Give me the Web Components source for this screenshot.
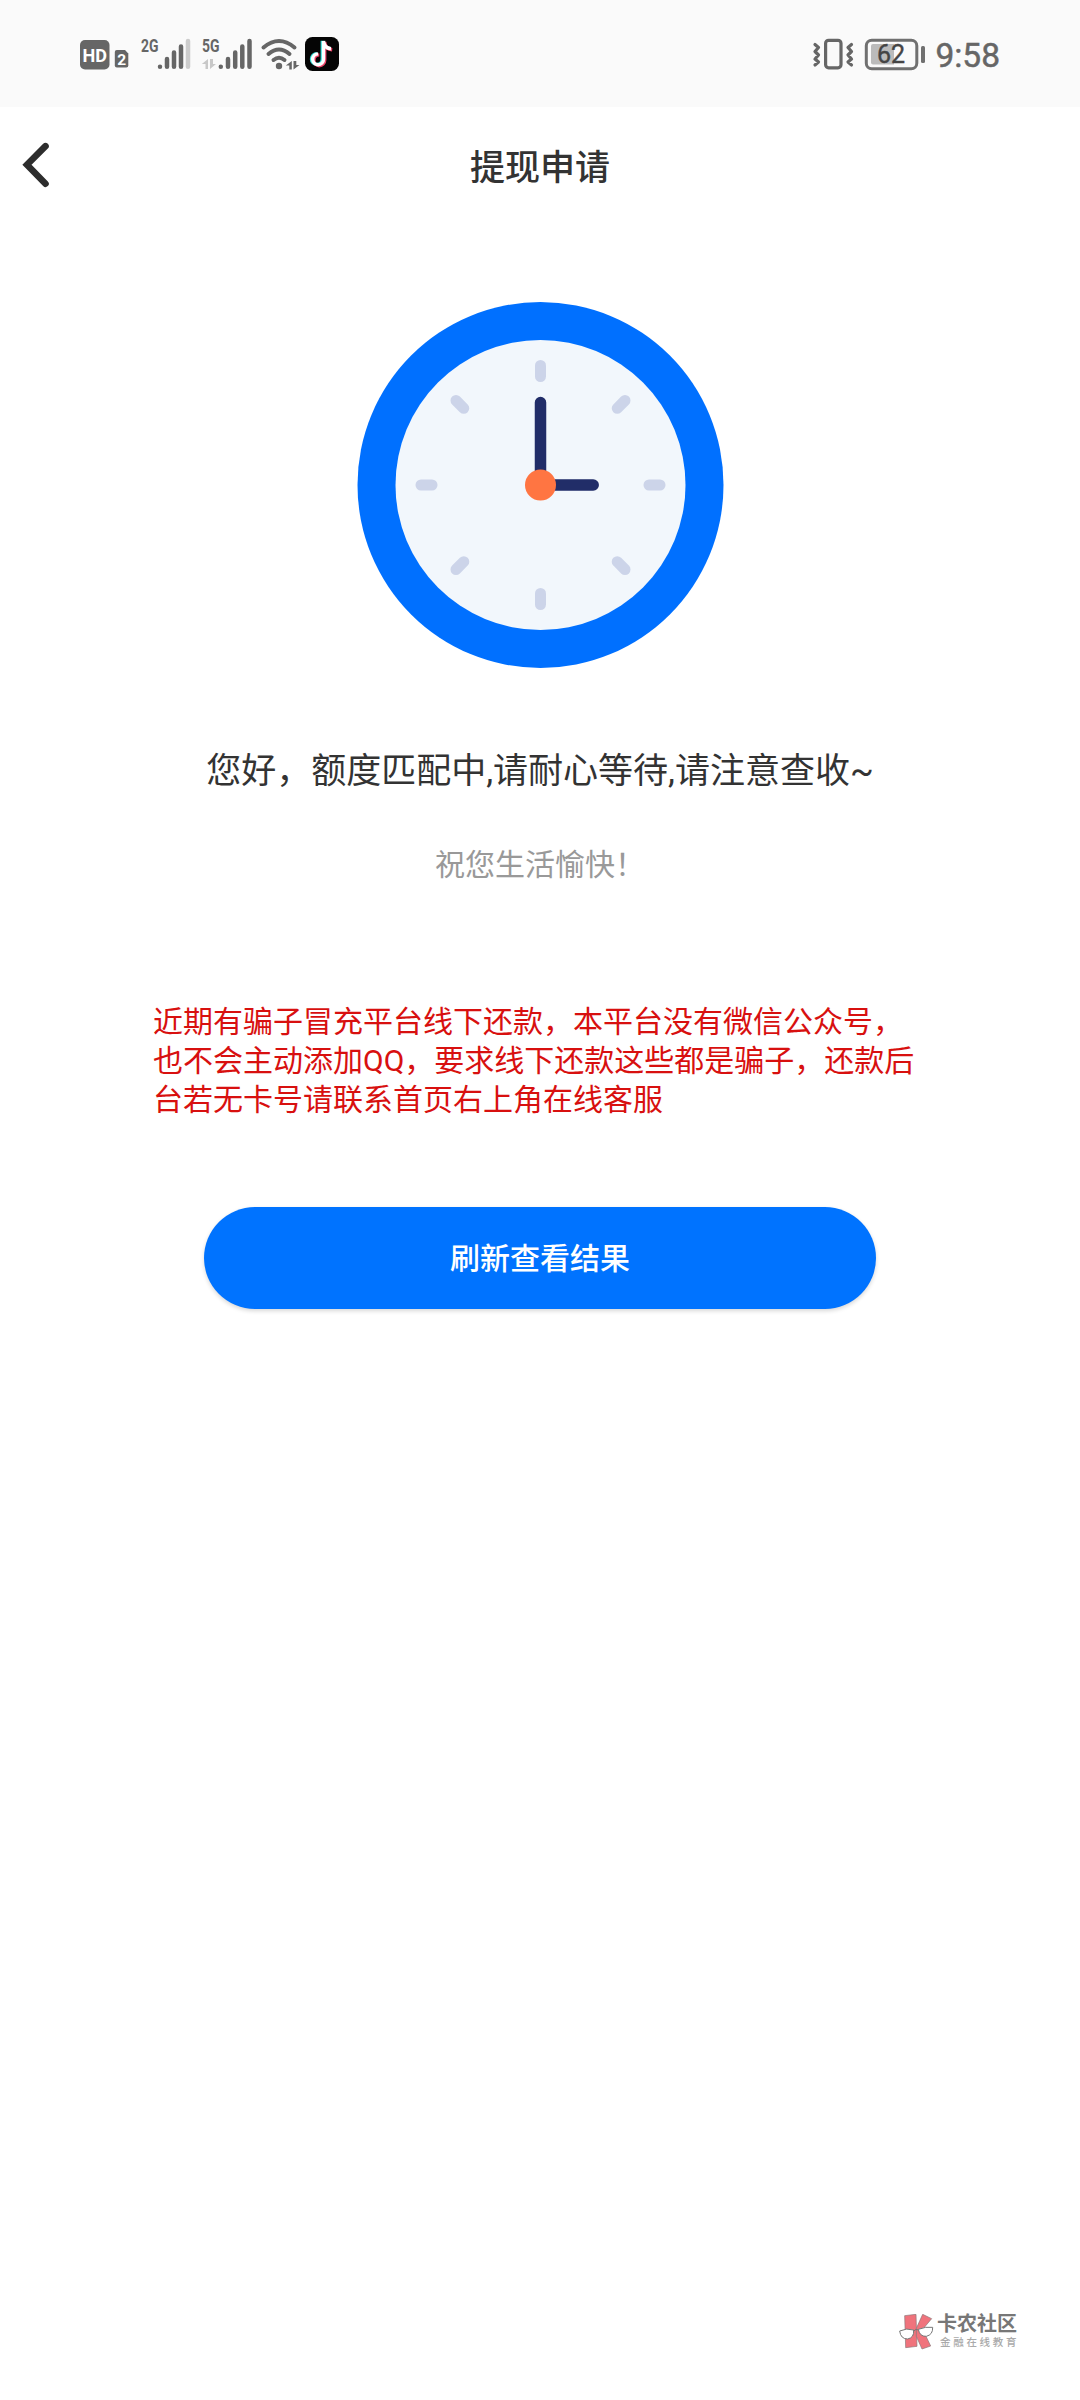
<!DOCTYPE html>
<html lang="zh-CN">
<head>
<meta charset="utf-8">
<title>提现申请</title>
<style>
html,body{margin:0;padding:0;background:#fff}
body{width:1080px;height:2400px;overflow:hidden;font-family:Roboto,"Noto Sans CJK SC",sans-serif;color:#333}
</style>
</head>
<body>
<withdraw-page></withdraw-page>
<script>
const define = (name, css, html) => customElements.define(name, class extends HTMLElement {
  constructor() {
    super();
    this.attachShadow({mode: 'open'}).innerHTML = `<style>${css}</style>${html}`;
  }
});

define('status-bar', `
:host{display:flex;justify-content:space-between;box-sizing:border-box;height:107px;padding:25px 80px 0 80px;background:#fafafa;flex:none}
div{display:flex}
svg{display:block;height:60px}
text{font-family:Roboto,sans-serif}
.time{font-size:33.500px;line-height:61px;color:#666;-webkit-text-stroke:.5px #666}
`, `
<div>
<svg width="52" viewBox="80 25 52 60"><rect x="80" y="40" width="29.5" height="29.5" rx="5" fill="#666"/><text x="94.8" y="61.5" font-size="18.5" font-weight="700" fill="#fff" text-anchor="middle" textLength="24.5" lengthAdjust="spacingAndGlyphs">HD</text>
<path d="M117 50h8l3.300 3.500v12a2 2 0 0 1-2 2h-9.500a2 2 0 0 1-2-2v-13.500a2 2 0 0 1 2-2z" fill="#666"/><text x="121.600" y="64.500" font-size="15.500" font-weight="700" fill="#fff" text-anchor="middle">2</text></svg>
<svg width="64" viewBox="132 25 64 60"><text x="141" y="52" font-size="18.500" font-weight="700" fill="#666" textLength="17.500" lengthAdjust="spacingAndGlyphs">2G</text>
<g stroke="#666" stroke-width="4.500" stroke-linecap="round"><path d="M160 66.700v.1M167 59v7.700M174 52.500v14.200M181 46.500v20.200"/><path d="M188 41v25.700" stroke="#ccc"/></g></svg>
<svg width="60" viewBox="196 25 60 60"><text x="202" y="52" font-size="18.500" font-weight="700" fill="#666" textLength="17.500" lengthAdjust="spacingAndGlyphs">5G</text>
<path d="M208 59v10h-2.500v-5h-3.700zM210 59v10l6-5h-3v-5z" fill="#c8c8c8"/>
<path d="M220.800 66.700v.1M228 59v7.700M235.200 52.500v14.200M242.300 46.500v20.200M249.500 41v25.700" stroke="#666" stroke-width="4.500" stroke-linecap="round"/></svg>
<svg width="48" viewBox="256 25 48 60"><g fill="none" stroke="#666" stroke-width="4" stroke-linecap="round"><path d="M263.500 47.500Q279 34.500 294.500 47.500M268.500 54Q279 45 289.500 54M273.500 60Q279 55.500 284.500 60"/></g><circle cx="279" cy="66" r="3.200" fill="#666"/><path d="M291.800 61v8.500h-2.500v-4h-3.500zM293.500 61v8.500l6-4.500h-3.200v-4z" fill="#666"/></svg>
<svg width="40" viewBox="304 25 40 60"><rect x="305" y="37" width="34" height="34" rx="7.500" fill="#050505"/><g fill="none" stroke-width="3.400"><path d="M323.500 41v18.300a5.400 5.400 0 1 1-5.400-5.400M323.500 41c.4 4.500 3 7.300 7.500 7.700" stroke="#35ddda" transform="translate(-1.200,-.2)"/><path d="M323.500 41v18.300a5.400 5.400 0 1 1-5.400-5.400M323.500 41c.4 4.500 3 7.300 7.500 7.700" stroke="#ed456a" transform="translate(1.200,1)"/><path d="M323.500 41v18.300a5.400 5.400 0 1 1-5.400-5.400M323.500 41c.4 4.500 3 7.300 7.500 7.700" stroke="#fff"/></g></svg>
</div>
<div>
<svg width="48" viewBox="811 25 48 60"><g fill="none" stroke="#666" stroke-width="3.200" stroke-linejoin="round" stroke-linecap="round"><rect x="825.600" y="40.300" width="15.400" height="27.500" rx="3"/><path d="M815 44.500l3.500 3-3.500 4 3.500 3.500-3.500 4 3.500 3-3.500 3M851.500 44.500l-3.500 3 3.500 4-3.500 3.500 3.500 4-3.500 3 3.500 3"/></g></svg>
<svg width="76" viewBox="859 25 76 60"><rect x="866.300" y="40.300" width="50.500" height="28.500" rx="5.500" fill="none" stroke="#707070" stroke-width="3"/><path d="M873 44h21v20.500h-21a2 2 0 0 1-2-2V46a2 2 0 0 1 2-2z" fill="#bbb"/><text x="891" y="62.500" font-size="25" fill="#444" stroke="#444" stroke-width=".4" text-anchor="middle">62</text><rect x="921" y="46" width="4" height="17" rx="1.500" fill="#707070"/></svg>
<span class="time">9:58</span>
</div>`);

define('nav-header', `
:host{display:grid;grid-template-columns:120px 1fr 120px;align-items:center;height:120px;flex:none}
svg{display:block}
h1{margin:0;padding-top:4px;text-align:center;font:500 35px/50px Roboto,"Noto Sans CJK SC",sans-serif;color:#333}
`, `<svg width="70" height="50" viewBox="0 140 70 50"><path d="M45.500 144.200L27 162.700L45.500 181.700" fill="none" stroke="#2d2d2d" stroke-width="6.600" stroke-linecap="round"/></svg><h1><slot></slot></h1>`);

define('waiting-clock', `:host{display:block;width:367px;height:366px}svg{display:block}`, `
<svg width="367" height="366" viewBox="-183.500 -183 367 366">
<circle r="183" fill="#0070ff"/><circle r="145" fill="#f2f7fc"/>
<g stroke="#ccd4e9" stroke-width="11" stroke-linecap="round">${[0,45,90,135,180,225,270,315].map(a => `<path d="M0-119.500V-108.500" transform="rotate(${a})"/>`).join('')}</g>
<path d="M0-82.500V0H52.700" fill="none" stroke="#212d68" stroke-width="11.500" stroke-linecap="round"/>
<circle r="15.500" fill="#ff7542"/></svg>`);

define('primary-button', `
:host{display:block;width:672px}
button{display:block;width:100%;height:102px;border:0;padding:2px 0 0;border-radius:51px;background:#0073ff;color:#fff;font:500 30px/100px Roboto,"Noto Sans CJK SC",sans-serif;box-shadow:0 2px 4px rgba(0,0,0,.16)}
`, `<button><slot></slot></button>`);

define('community-mark', `
:host{display:flex;align-self:flex-end;gap:3px;margin:auto 62px 50px 0}
svg{display:block;margin-top:2px}
div{display:flex;flex-direction:column;width:81px}
b{font:700 20px/22px "Noto Sans CJK SC",sans-serif;color:#777}
small{font:500 10.500px/14px "Noto Sans CJK SC",sans-serif;letter-spacing:2.700px;color:#aaa;padding-left:3px;padding-top:1px;white-space:nowrap}
`, `
<svg width="35" height="36" viewBox="30 37 105 108"><g fill="#f0737c" stroke="#8a7778" stroke-width="2"><path d="M47 42L81 38L84 134L50 138z"/><path d="M82 80L101 38L128 51L101 83L125 133L99 142L82 104z"/></g><g fill="#fff" stroke="#777" stroke-width="3"><path d="M32 88Q52 78 74 85Q76 108 56 112Q35 112 32 88zM88 83Q110 74 131 77Q132 99 112 104Q92 105 88 83z"/><path d="M74 88Q81 80 88 85" fill="none"/></g></svg>
<div><b>卡农社区</b><small>金融在线教育</small></div>`);

define('withdraw-page', `
:host{display:flex;flex-direction:column;width:1080px;height:2400px;background:#fff}
main{display:flex;flex-direction:column;align-items:center;padding-top:75px}
p{margin:0}
.msg{margin-top:78px;font-size:35px;line-height:52px;color:#333;white-space:nowrap}
.wish{margin-top:45px;font-size:30px;line-height:44px;color:#999}
.warn{margin-top:115px;width:774px;font-size:30px;line-height:39px;color:#d8100f}
primary-button{margin-top:88px}
`, `
<status-bar></status-bar>
<nav-header>提现申请</nav-header>
<main>
<waiting-clock></waiting-clock>
<p class="msg">您好，额度匹配中,请耐心等待,请注意查收~</p>
<p class="wish">祝您生活愉快！</p>
<p class="warn">近期有骗子冒充平台线下还款，本平台没有微信公众号，也不会主动添加QQ，要求线下还款这些都是骗子，还款后台若无卡号请联系首页右上角在线客服</p>
<primary-button>刷新查看结果</primary-button>
</main>
<community-mark></community-mark>`);
</script>
</body>
</html>
